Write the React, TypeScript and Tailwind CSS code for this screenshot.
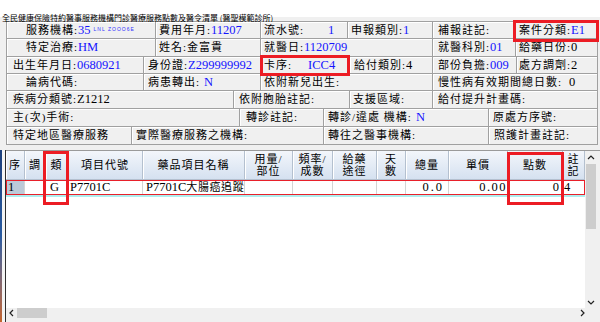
import React from "react";

const cjk = "font-['Liberation_Serif','Noto_Sans_CJK_TC',serif]";
const lab = `${cjk} text-[11px] tracking-[1px] text-black leading-none`;
const val = "font-['Liberation_Serif',serif] text-[12.5px] leading-none text-[#1414ff]";
const blk = "font-['Liberation_Serif',serif] text-[12.5px] leading-none text-black";
const cell =
  "flex items-center h-full shrink-0 whitespace-nowrap border-r border-b border-[#a0a0a0] shadow-[inset_1px_1px_0_#ffffff]";

const RedBox = ({ className }: { className: string }) => (
  <div className={`absolute border-[3px] border-[#ec1c24] pointer-events-none ${className}`} />
);

const Up = () => (
  <svg width="8" height="5" viewBox="0 0 8 5">
    <path d="M1 4 L4 1 L7 4" fill="none" stroke="#222" strokeWidth="1.2" />
  </svg>
);
const Down = () => (
  <svg width="8" height="5" viewBox="0 0 8 5">
    <path d="M1 1 L4 4 L7 1" fill="none" stroke="#222" strokeWidth="1.2" />
  </svg>
);
const Left = () => (
  <svg width="5" height="8" viewBox="0 0 5 8">
    <path d="M4 1 L1 4 L4 7" fill="none" stroke="#222" strokeWidth="1.2" />
  </svg>
);
const Right = () => (
  <svg width="5" height="8" viewBox="0 0 5 8">
    <path d="M1 1 L4 4 L1 7" fill="none" stroke="#222" strokeWidth="1.2" />
  </svg>
);

const FormPanel = () => (
  <div className="ml-[6px] mr-[3px] border-t border-l border-[#a0a0a0]">
    {/* row 1 */}
    <div className="flex h-[17px]">
      <div className={`${cell} w-[149px] pl-[19px]`}>
        <span className={lab}>服務機構:</span>
        <span className={val}>35</span>
        <span className="ml-[3px] font-['Liberation_Sans',sans-serif] text-[5px] tracking-[1px] text-[#3030ff]">LNL ZOOO6E</span>
      </div>
      <div className={`${cell} w-[105px] pl-[3px]`}>
        <span className={lab}>費用年月:</span>
        <span className={val}>11207</span>
      </div>
      <div className={`${cell} w-[87px] pl-[3px]`}>
        <span className={lab}>流水號:</span>
        <span className={`${val} ml-[24px]`}>1</span>
      </div>
      <div className={`${cell} w-[85px] pl-[3px]`}>
        <span className={lab}>申報類別:</span>
        <span className={val}>1</span>
      </div>
      <div className={`${cell} w-[81px] pl-[5px]`}>
        <span className={lab}>補報註記:</span>
      </div>
      <div className={`${cell} w-[84px] pl-[5px] relative`}>
        <span className={lab}>案件分類:</span>
        <span className={val}>E1</span>
        <RedBox className="-left-[1px] -right-[2px] -top-[2px] -bottom-[4px]" />
      </div>
    </div>
    {/* row 2 */}
    <div className="flex h-[18px]">
      <div className={`${cell} w-[149px] pl-[19px]`}>
        <span className={lab}>特定治療:</span>
        <span className={val}>HM</span>
      </div>
      <div className={`${cell} w-[105px] pl-[3px]`}>
        <span className={lab}>姓名:金富貴</span>
      </div>
      <div className={`${cell} w-[172px] pl-[3px]`}>
        <span className={lab}>就醫日:</span>
        <span className={val}>1120709</span>
      </div>
      <div className={`${cell} w-[83px] pl-[5px]`}>
        <span className={lab}>就醫科別:</span>
        <span className={val}>01</span>
      </div>
      <div className={`${cell} w-[82px] pl-[3px]`}>
        <span className={lab}>給藥日份:</span>
        <span className={blk}>0</span>
      </div>
    </div>
    {/* row 3 */}
    <div className="flex h-[17px]">
      <div className={`${cell} w-[137px] pl-[6px]`}>
        <span className={lab}>出生年月日:</span>
        <span className={val}>0680921</span>
      </div>
      <div className={`${cell} w-[117px] pl-[4px]`}>
        <span className={lab}>身份證:</span>
        <span className={val}>Z299999992</span>
      </div>
      <div className={`${cell} w-[89px] pl-[3px] relative`}>
        <span className={lab}>卡序:</span>
        <span className={`${val} ml-[16px]`}>ICC4</span>
        <RedBox className="-left-[1px] -right-[1px] -top-[2px] -bottom-[3px]" />
      </div>
      <div className={`${cell} w-[83px] pl-[4px]`}>
        <span className={lab}>給付類別:</span>
        <span className={blk}>4</span>
      </div>
      <div className={`${cell} w-[84px] pl-[5px]`}>
        <span className={lab}>部份負擔:</span>
        <span className={val}>009</span>
      </div>
      <div className={`${cell} w-[81px] pl-[2px]`}>
        <span className={lab}>處方調劑:</span>
        <span className={blk}>2</span>
      </div>
    </div>
    {/* row 4 */}
    <div className="flex h-[17px]">
      <div className={`${cell} w-[137px] pl-[19px]`}>
        <span className={lab}>論病代碼:</span>
      </div>
      <div className={`${cell} w-[117px] pl-[4px]`}>
        <span className={lab}>病患轉出:</span>
        <span className={`${val} ml-[4px]`}>N</span>
      </div>
      <div className={`${cell} w-[172px] pl-[3px]`}>
        <span className={lab}>依附新兒出生:</span>
      </div>
      <div className={`${cell} w-[165px] pl-[5px]`}>
        <span className={lab}>慢性病有效期間總日數:</span>
        <span className={`${blk} ml-[7px]`}>0</span>
      </div>
    </div>
    {/* row 5 */}
    <div className="flex h-[18px]">
      <div className={`${cell} w-[227px] pl-[6px]`}>
        <span className={lab}>疾病分類號:</span>
        <span className={blk}>Z1212</span>
      </div>
      <div className={`${cell} w-[116px] pl-[5px]`}>
        <span className={lab}>依附胞胎註記:</span>
      </div>
      <div className={`${cell} w-[83px] pl-[3px]`}>
        <span className={lab}>支援區域:</span>
      </div>
      <div className={`${cell} w-[165px] pl-[5px]`}>
        <span className={lab}>給付提升計畫碼:</span>
      </div>
    </div>
    {/* row 6 */}
    <div className="flex h-[18px]">
      <div className={`${cell} w-[233px] pl-[6px]`}>
        <span className={lab}>主(次)手術:</span>
      </div>
      <div className={`${cell} w-[84px] pl-[6px]`}>
        <span className={lab}>轉診註記:</span>
      </div>
      <div className={`${cell} w-[165px] pl-[4px]`}>
        <span className={lab}>轉診/違處 機構:</span>
        <span className={`${val} ml-[4px]`}>N</span>
      </div>
      <div className={`${cell} w-[109px] pl-[4px]`}>
        <span className={lab}>原處方序號:</span>
      </div>
    </div>
    {/* row 7 */}
    <div className="flex h-[18px]">
      <div className={`${cell} w-[125px] pl-[6px]`}>
        <span className={lab}>特定地區醫療服務</span>
      </div>
      <div className={`${cell} w-[192px] pl-[4px]`}>
        <span className={lab}>實際醫療服務之機構:</span>
      </div>
      <div className={`${cell} w-[165px] pl-[4px]`}>
        <span className={lab}>轉往之醫事機構:</span>
      </div>
      <div className={`${cell} w-[109px] pl-[5px]`}>
        <span className={lab}>照護計畫註記:</span>
      </div>
    </div>
  </div>
);

const hd =
  "flex flex-col items-center justify-center h-full shrink-0 border-r border-[#b4c0cf] shadow-[inset_1px_0_0_#ffffff] text-[11px] leading-[12px] tracking-[1px] text-black";
const td = "flex items-center h-full shrink-0 whitespace-nowrap overflow-hidden border-r border-[#d4d4d4]";

const Grid = () => (
  <div className="flex h-[172px] mt-[5px]">
    <div className="w-[2px] h-full bg-gradient-to-b from-[#1c3f7c] via-[#2a5ba0] to-[#c4642a]" />
    <div className="w-[3px] h-full bg-[#f4f4f4]" />
    <div className="w-[1px] h-full bg-[#2e2e2e]" />
    <div className="flex flex-col w-[594px]">
      <div className="relative flex h-[158px] border-t border-[#9a9a9a]">
        <div className="flex flex-col w-[579px] bg-white">
          <div className={`flex h-[29px] bg-gradient-to-b from-[#f3f6fb] to-[#d5e1f0] border-b border-[#b4c0cf] ${cjk}`}>
            <div className={`${hd} w-[19px]`}>序</div>
            <div className={`${hd} w-[21px]`}>調</div>
            <div className={`${hd} w-[22px]`}>類</div>
            <div className={`${hd} w-[75px]`}>項目代號</div>
            <div className={`${hd} w-[102px]`}>藥品項目名稱</div>
            <div className={`${hd} w-[48px]`}><span>用量/</span><span>部位</span></div>
            <div className={`${hd} w-[40px]`}><span>頻率/</span><span>成數</span></div>
            <div className={`${hd} w-[44px]`}><span>給藥</span><span>途徑</span></div>
            <div className={`${hd} w-[29px]`}><span>天</span><span>數</span></div>
            <div className={`${hd} w-[43px]`}>總量</div>
            <div className={`${hd} w-[59px]`}>單價</div>
            <div className={`${hd} w-[55px]`}>點數</div>
            <div className={`${hd} w-[22px]`}><span>註</span><span>記</span></div>
          </div>
          <div className={`flex h-[15px] outline outline-1 -outline-offset-1 outline-[#e8202a] ${blk}`}>
            <div className={`${td} w-[19px] pl-[2px] bg-[#bccad8]`}>1</div>
            <div className={`${td} w-[21px]`} />
            <div className={`${td} w-[22px] pl-[4px]`}>G</div>
            <div className={`${td} w-[75px] pl-[2px]`}>P7701C</div>
            <div className={`${td} w-[102px] pl-[3px] ${cjk} text-[12.5px]`}>
              P7701C<span className="text-[11px] tracking-[0.6px]">大腸癌追蹤</span>
            </div>
            <div className={`${td} w-[48px]`} />
            <div className={`${td} w-[40px]`} />
            <div className={`${td} w-[44px]`} />
            <div className={`${td} w-[29px]`} />
            <div className={`${td} w-[43px] justify-end pr-[4px] tracking-[2px]`}>0.0</div>
            <div className={`${td} w-[59px] justify-end pr-[0px] tracking-[1.5px]`}>0.00</div>
            <div className={`${td} w-[55px] justify-end pr-[3px]`}>0</div>
            <div className={`${td} w-[22px] pl-[1px]`}>4</div>
          </div>
          <div className="h-[2px] bg-[#aeeeee]" />
          <div className="flex-1 bg-white" />
        </div>
        <div className="flex flex-col w-[12px] bg-[#f0f0f0]">
          <div className="flex items-center justify-center h-[13px]"><Up /></div>
          <div className="h-[65px] mx-[1px] bg-[#cdcdcd]" />
          <div className="flex-1" />
          <div className="flex items-center justify-center h-[12px]"><Down /></div>
        </div>
        <RedBox className="left-[37px] top-[0px] w-[26px] h-[54px]" />
        <RedBox className="left-[501px] top-[1px] w-[57px] h-[53px]" />
      </div>
      <div className="flex h-[10px] bg-[#f0f0f0]">
        <div className="flex items-center justify-center w-[11px]"><Left /></div>
        <div className="w-[30px] h-full bg-[#cdcdcd]" />
        <div className="flex-1" />
        <div className="flex items-center justify-center w-[11px]"><Right /></div>
        <div className="w-[12px] h-full bg-[#f0f0f0]" />
      </div>
      <div className="flex-1 bg-[#f0f0f0]" />
    </div>
  </div>
);

export default function App() {
  return (
    <div className="w-[600px] h-[322px] overflow-hidden bg-[#f0f0f0]">
      <div className="h-[17px] bg-white pl-[2px] pt-[3px]">
        <span className="font-['Noto_Sans_CJK_TC',sans-serif] text-[8px] leading-none text-black whitespace-nowrap">
          全民健康保險特約醫事服務機構門診醫療服務點數及醫令清單 (醫聖模範診所)
        </span>
      </div>
      <div className="pt-[4px]">
        <FormPanel />
      </div>
      <Grid />
    </div>
  );
}
